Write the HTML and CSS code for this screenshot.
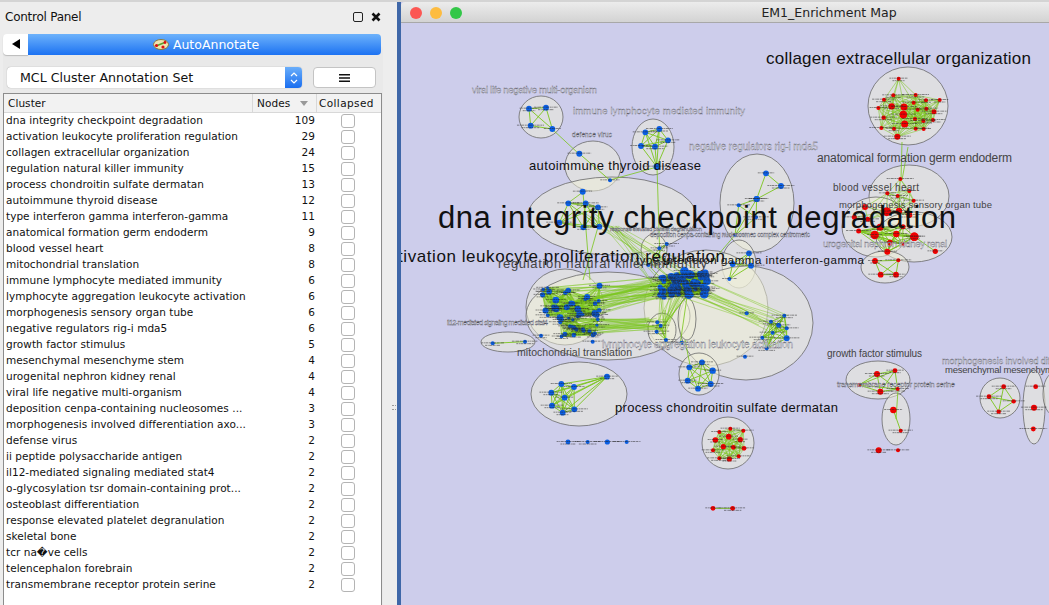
FILE: index.html
```html
<!DOCTYPE html>
<html>
  <head>
    <meta charset="utf-8">
    <title>EM1_Enrichment Map</title>
    <link rel="stylesheet" href="styles.css">
  </head>
  <body>
    <div class="controlPanel">
      <div class="panelTitle">
        <span>Control Panel</span>
        <div class="panelIcons">
          <span class="iconFloat"></span>
          <svg class="iconClose" width="10" height="10" viewBox="0 0 10 10"><path d="M1.5 1.5l7 7M8.5 1.5l-7 7"/></svg>
        </div>
      </div>
      <div class="tabBar">
        <button class="tabBack"><svg width="8" height="10" viewBox="0 0 8 10"><path d="M8 0v10L0 5z"/></svg></button>
        <button class="tabActive">
          <svg width="16" height="11" viewBox="0 0 16 11">
            <ellipse cx="8" cy="5.5" rx="7.5" ry="5" fill="#efe4b0" stroke="#8a7a3a"/>
            <path d="M3 7l10-4" stroke="#5aa02c" stroke-width="1.5"/>
            <circle cx="3.5" cy="6.5" r="1.6" fill="#e01010"/>
            <circle cx="10" cy="8" r="1.6" fill="#e01010"/>
            <circle cx="12" cy="3.5" r="1.4" fill="#e01010"/>
          </svg>
          AutoAnnotate
        </button>
      </div>
      <div class="tabBody">
        <div class="toolRow">
          <div class="combo">
            <span class="comboText">MCL Cluster Annotation Set</span>
            <span class="comboArrows">
              <svg width="8" height="14" viewBox="0 0 8 14"><path d="M1 5l3-3 3 3M1 9l3 3 3-3"/></svg>
            </span>
          </div>
          <button class="menuButton">
            <svg width="11" height="8" viewBox="0 0 11 8"><path d="M0 0h11v1.6H0zM0 3.2h11v1.6H0zM0 6.4h11V8H0z"/></svg>
          </button>
        </div>
        <div class="tableWrap">
          <div class="tableHeader">
            <div class="headCluster">Cluster</div>
            <div class="headNodes">Nodes <span class="sortArrow"></span></div>
            <div class="headCollapsed">Collapsed</div>
          </div>
          <div class="row"><span class="name">dna integrity checkpoint degradation</span><span class="num">109</span><span class="chk"><input type="checkbox"></span></div>
          <div class="row"><span class="name">activation leukocyte proliferation regulation</span><span class="num">29</span><span class="chk"><input type="checkbox"></span></div>
          <div class="row"><span class="name">collagen extracellular organization</span><span class="num">24</span><span class="chk"><input type="checkbox"></span></div>
          <div class="row"><span class="name">regulation natural killer immunity</span><span class="num">15</span><span class="chk"><input type="checkbox"></span></div>
          <div class="row"><span class="name">process chondroitin sulfate dermatan</span><span class="num">13</span><span class="chk"><input type="checkbox"></span></div>
          <div class="row"><span class="name">autoimmune thyroid disease</span><span class="num">12</span><span class="chk"><input type="checkbox"></span></div>
          <div class="row"><span class="name">type interferon gamma interferon-gamma</span><span class="num">11</span><span class="chk"><input type="checkbox"></span></div>
          <div class="row"><span class="name">anatomical formation germ endoderm</span><span class="num">9</span><span class="chk"><input type="checkbox"></span></div>
          <div class="row"><span class="name">blood vessel heart</span><span class="num">8</span><span class="chk"><input type="checkbox"></span></div>
          <div class="row"><span class="name">mitochondrial translation</span><span class="num">8</span><span class="chk"><input type="checkbox"></span></div>
          <div class="row"><span class="name">immune lymphocyte mediated immunity</span><span class="num">6</span><span class="chk"><input type="checkbox"></span></div>
          <div class="row"><span class="name">lymphocyte aggregation leukocyte activation</span><span class="num">6</span><span class="chk"><input type="checkbox"></span></div>
          <div class="row"><span class="name">morphogenesis sensory organ tube</span><span class="num">6</span><span class="chk"><input type="checkbox"></span></div>
          <div class="row"><span class="name">negative regulators rig-i mda5</span><span class="num">6</span><span class="chk"><input type="checkbox"></span></div>
          <div class="row"><span class="name">growth factor stimulus</span><span class="num">5</span><span class="chk"><input type="checkbox"></span></div>
          <div class="row"><span class="name">mesenchymal mesenchyme stem</span><span class="num">4</span><span class="chk"><input type="checkbox"></span></div>
          <div class="row"><span class="name">urogenital nephron kidney renal</span><span class="num">4</span><span class="chk"><input type="checkbox"></span></div>
          <div class="row"><span class="name">viral life negative multi-organism</span><span class="num">4</span><span class="chk"><input type="checkbox"></span></div>
          <div class="row"><span class="name">deposition cenpa-containing nucleosomes ...</span><span class="num">3</span><span class="chk"><input type="checkbox"></span></div>
          <div class="row"><span class="name">morphogenesis involved differentiation axo...</span><span class="num">3</span><span class="chk"><input type="checkbox"></span></div>
          <div class="row"><span class="name">defense virus</span><span class="num">2</span><span class="chk"><input type="checkbox"></span></div>
          <div class="row"><span class="name">ii peptide polysaccharide antigen</span><span class="num">2</span><span class="chk"><input type="checkbox"></span></div>
          <div class="row"><span class="name">il12-mediated signaling mediated stat4</span><span class="num">2</span><span class="chk"><input type="checkbox"></span></div>
          <div class="row"><span class="name">o-glycosylation tsr domain-containing prot...</span><span class="num">2</span><span class="chk"><input type="checkbox"></span></div>
          <div class="row"><span class="name">osteoblast differentiation</span><span class="num">2</span><span class="chk"><input type="checkbox"></span></div>
          <div class="row"><span class="name">response elevated platelet degranulation</span><span class="num">2</span><span class="chk"><input type="checkbox"></span></div>
          <div class="row"><span class="name">skeletal bone</span><span class="num">2</span><span class="chk"><input type="checkbox"></span></div>
          <div class="row"><span class="name">tcr na&#xFFFD;ve cells</span><span class="num">2</span><span class="chk"><input type="checkbox"></span></div>
          <div class="row"><span class="name">telencephalon forebrain</span><span class="num">2</span><span class="chk"><input type="checkbox"></span></div>
          <div class="row"><span class="name">transmembrane receptor protein serine</span><span class="num">2</span><span class="chk"><input type="checkbox"></span></div>
        </div>
      </div>
    </div>

    <div class="gutter"><span class="grip"></span></div>

    <div class="desktop">
      <div class="networkWindow">
        <div class="titleBar">
          <div class="lights">
            <span class="light red"></span>
            <span class="light yellow"></span>
            <span class="light green"></span>
          </div>
          <span class="windowTitle">EM1_Enrichment Map</span>
        </div>
        <svg id="canvas" class="canvas" viewBox="401 23 648 582" width="648" height="582"></svg>
      </div>
    </div>

    <script src="graph.js"></script>
  </body>
</html>
```

FILE: styles.css
```css
* { box-sizing: border-box; }
html, body { margin: 0; height: 100%; }
body {
  display: flex;
  height: 605px;
  overflow: hidden;
  background: #ededed;
  font-family: "DejaVu Sans", sans-serif;
  color: #111;
  border-top: 2px solid #d4d4d4;
}

/* left panel */
.controlPanel { width: 383px; flex: none; display: flex; flex-direction: column; }
.panelTitle {
  height: 28px;
  padding: 2px 2px 0 5px;
  display: flex;
  align-items: center;
  justify-content: space-between;
  font-size: 12px;
  letter-spacing: -.25px;
}
.panelIcons { display: flex; align-items: center; gap: 8px; }
.iconFloat { width: 10px; height: 10px; border: 1.5px solid #222; border-radius: 2px; }
.iconClose path { stroke: #111; stroke-width: 2.6; fill: none; }

.tabBar { display: flex; height: 21px; margin: 4px 2px 0 3px; position: relative; z-index: 1; }
.tabBack {
  width: 25px;
  border: none;
  background: #fff;
  border-radius: 4px 0 0 4px;
  padding: 0;
  box-shadow: 0 1px 1px #bbb;
}
.tabBack path { fill: #000; }
.tabActive {
  flex: 1;
  border: none;
  padding: 0 0 0 3px;
  border-radius: 0 4px 4px 0;
  background: linear-gradient(#6db2fb, #1c72f2);
  color: #fff;
  font: 12.5px "DejaVu Sans", sans-serif;
  display: flex;
  align-items: center;
  justify-content: center;
  gap: 4px;
}

.tabBody {
  flex: 1;
  margin: -9px 0 0 3px;
  padding-top: 21px;
  background: #e9e9e9;
  border-radius: 4px 4px 0 0;
  min-height: 0;
}
.toolRow { display: flex; gap: 11px; padding: 0 7px 0 4px; height: 21px; }
.combo {
  width: 295px;
  background: #fff;
  border-radius: 4px;
  display: flex;
  justify-content: space-between;
  box-shadow: 0 0 1px #888;
}
.comboText { padding-left: 13px; font-size: 12.6px; line-height: 21px; }
.comboArrows {
  width: 17px;
  background: linear-gradient(#6aaefa, #1a6ef0);
  border-radius: 0 4px 4px 0;
  display: flex;
  align-items: center;
  justify-content: center;
}
.comboArrows path { stroke: #fff; fill: none; stroke-width: 1.2; }
.menuButton {
  width: 63px;
  background: #fff;
  border: 1px solid #c4c4c4;
  border-radius: 4px;
  padding: 0;
}
.menuButton path { fill: #111; }

.tableWrap {
  margin-top: 5px;
  height: 520px;
  margin-right: 1px;
  background: #fff;
  border: 1px solid #8c8c8c;
  border-bottom: none;
  overflow: hidden;
}
.tableHeader {
  display: flex;
  height: 19px;
  background: #f2f2f2;
  border-bottom: 1px solid #d8d8d8;
  font-size: 10.5px;
  letter-spacing: .07px;
  line-height: 18px;
}
.headCluster { width: 249px; padding-left: 4px; border-right: 1px solid #d8d8d8; }
.headNodes { width: 64px; padding-left: 4px; border-right: 1px solid #d8d8d8; }
.headCollapsed { padding-left: 2px; letter-spacing: .4px; }
.sortArrow {
  display: inline-block;
  margin-left: 6px;
  border-left: 4.5px solid transparent;
  border-right: 4.5px solid transparent;
  border-top: 5px solid #999;
  vertical-align: 1px;
}
.row { display: flex; height: 16px; font-size: 10.5px; letter-spacing: .04px; line-height: 15px; }
.name { width: 249px; padding-left: 2px; white-space: nowrap; overflow: hidden; }
.num { width: 62px; text-align: right; }
.chk { flex: 1; display: flex; justify-content: center; padding-top: 1px; }
.chk input {
  appearance: none;
  margin: 0;
  width: 14px;
  height: 14px;
  background: #fff;
  border: 1px solid #b4b4b4;
  border-radius: 3px;
}

/* splitter between panel and desktop */
.gutter { width: 14px; flex: none; position: relative; }
.grip {
  position: absolute;
  left: 9px;
  top: 403px;
  width: 4px;
  height: 5px;
  border-top: 1px dotted #999;
  border-bottom: 1px dotted #999;
}

.desktop { flex: 1; background: #3f67a8; padding-left: 4px; min-width: 0; }
.networkWindow { height: 100%; display: flex; flex-direction: column; background: #cdcdeb; }
.titleBar {
  height: 21px;
  flex: none;
  position: relative;
  display: flex;
  align-items: center;
  justify-content: center;
  background: linear-gradient(#ececec, #d3d3d3);
  border-bottom: 1px solid #a8a8a8;
  border-radius: 4px 0 0 0;
  font-size: 12.5px;
}
.windowTitle { padding-left: 208px; color: #222; }
.lights { position: absolute; left: 9px; top: 5px; display: flex; gap: 8px; }
.light { width: 12px; height: 12px; border-radius: 50%; }
.red { background: #fc5753; }
.yellow { background: #fdbc40; }
.green { background: #33c748; }

.canvas { display: block; flex: 1; background: #cdcdeb; font-family: "Liberation Sans", sans-serif; }
.cluster { fill: rgba(240, 240, 215, .5); stroke: #6a6a6a; stroke-width: .8; }
.edge { stroke: #7cc61e; opacity: .9; }
.nodeLabel { stroke: #222; stroke-width: .9; stroke-dasharray: 2 .6 1 .5 3 .7; opacity: .55; }
.labelDark { fill: #111; }
.labelMid { fill: #444; }
.labelPale { fill: #f6f6fb; stroke: #50505e; stroke-width: .3; }
```

FILE: graph.js
```js
// enrichment map drawing, all coordinates are page pixels
var svg = document.getElementById('canvas');
var NS = 'http://www.w3.org/2000/svg';
var BLUE = '#0b5fe3', RED = '#f00000';

function add(name, attrs, parent) {
  var el = document.createElementNS(NS, name);
  for (var k in attrs) el.setAttribute(k, attrs[k]);
  (parent || svg).appendChild(el);
  return el;
}

// small repeatable random so the picture is the same every time
var seed = 7;
function rnd() {
  seed = (seed * 16807) % 2147483647;
  return seed / 2147483647;
}

var ellipses = [
  [541,117,22,21],[653,147,21,28],[593,166,28,25],[612,216,84,39],[757,203,37,49],
  [908,106,40,39],[909,196,40,31],[876,227,34,30],[914,237,38,25],[885,267,24,16],
  [739,264,17,24],[654,250,13,16],[706,308,62,58],[746,323,67,57],[565,307,39,38],
  [608,316,82,44],[687,319,9,21],[662,330,14,17],[508,342,27,10],[579,394,48,32],
  [699,374,20,21],[728,443,26,26],[878,380,32,19],[896,419,14,26],[1000,398,20,20],
  [1034,407,11,37],[1054,394,11,21]
];
ellipses.forEach(function(e) {
  add('ellipse', {cx: e[0], cy: e[1], rx: e[2], ry: e[3], 'class': 'cluster'});
});

// zoomed coordinates: page = origin + value / 3
function pts(ox, oy, list) {
  return list.map(function(p) {
    return {x: ox + p[0] / 3, y: oy + p[1] / 3, r: p[2] || 2.9};
  });
}

var groups = [
  {c: BLUE, all: true, n: pts(380,0,[[447,326],[498,323],[452,377],[517,387]])},
  {c: BLUE, all: true, n: pts(380,0,[[796,397],[838,387],[864,421],[783,438],[825,440],[830,500,3.2]])},
  {c: BLUE, all: true, n: pts(380,0,[[598,461,3],[690,541,2]])},
  {c: BLUE, all: true, n: pts(400,170,[[505,100],[557,100],[594,112],[478,158],[550,172],[598,170]])},
  {c: BLUE, all: false, n: pts(400,170,[[548,65,3]])},
  {c: BLUE, all: true, n: pts(720,30,[[110,507,3],[138,430],[183,468]])},
  {c: BLUE, all: true, n: pts(720,30,[[110,507,3],[56,526,2],[108,562,2],[45,616,2]])},
  {c: RED, all: true, n: pts(720,30,[[536,146,2],[587,195,2],[520,196,2],[492,209,2],[581,218,2],[618,211,2],[659,210,2],[475,234,2],[515,229,3.2],[552,231,3.5],[593,239,2],[619,236,2],[642,245,2.5],[550,254,3.8],[491,263,2.2],[585,267,2],[610,273,2],[639,270,2],[554,282,3.5],[484,294,2],[522,296,2],[587,296,2],[611,297,2],[532,320,3]])},
  {c: RED, all: true, n: pts(720,30,[[541,447,2],[502,490,2],[533,498,2],[568,483,2],[581,512,2],[435,531,3],[500,545,4.5],[537,543,3.2],[568,555,3],[403,562,2.5],[443,568,2.5]])},
  {c: RED, all: true, n: pts(720,30,[[480,592,3.5],[549,590,2.5],[416,603,2.5],[464,615,4.2],[529,612,3.2],[583,620,4.2],[510,638,3],[548,642,2],[502,665,3]])},
  {c: RED, all: true, n: pts(720,30,[[583,620,4.2],[646,664,2.6]])},
  {c: RED, all: true, n: pts(720,30,[[465,693],[535,691,2],[482,734],[528,734]])},
  {c: BLUE, all: true, n: pts(400,170,[[1047,250],[1053,287],[998,282],[988,327,2]])},
  {c: BLUE, all: true, n: pts(400,170,[[800,222,2],[778,235,2],[745,285,2]])},
  {c: BLUE, all: true, n: pts(400,170,[[772,457,2],[782,467,2],[770,485,2],[798,510,2]])},
  {c: BLUE, all: true, n: pts(400,170,[[1153,437,2],[1113,455,2],[1136,466,2.5],[1160,475,2],[1118,488,2],[1087,503,2],[1160,505,3],[1100,535,2]])},
  {c: BLUE, all: false, n: pts(400,170,[[1040,430,2],[1035,560,2],[845,518,2]])},
  {c: BLUE, all: true, n: pts(400,170,[[278,520,2],[375,515,2]])},
  {c: BLUE, all: false, n: pts(400,170,[[423,497,2],[578,515,2]])},
  {c: BLUE, all: true, n: pts(440,340,[[501,110],[364,132],[402,141],[334,158],[374,173],[336,197],[403,208],[368,218]])},
  {c: BLUE, all: true, n: pts(440,340,[[786,67],[748,82],[818,92,3.2],[743,122],[812,132,3],[774,146]])},
  {c: RED, all: true, n: pts(440,340,[[871,266,2],[838,276,2],[910,272,2],[826,300,2.8],[866,290,2.8],[901,299,2.6],[850,320,2.6],[880,322,2.4],[912,325,2.4],[819,331,2],[838,355,2],[868,357,2.6],[896,349,2]])},
  {c: BLUE, all: false, n: pts(440,340,[[384,306,2.4],[443,306,2],[502,306,2.6],[560,306,2]])},
  {c: RED, all: true, n: pts(440,340,[[819,505,2.4],[878,505,2.4]])},
  {c: RED, all: true, n: pts(780,340,[[291,102,3],[345,92,2.4],[237,135,2],[301,155,3],[353,147,2]])},
  {c: RED, all: true, n: pts(780,340,[[340,210,3.2],[362,272,2]])},
  {c: RED, all: false, n: pts(780,340,[[296,331,3],[354,331,2]])},
  {c: RED, all: true, n: pts(780,340,[[671,140,2.4],[627,170,2.4],[701,184,2.2],[656,215,2.2]])},
  {c: RED, all: false, n: pts(780,340,[[767,140,2.4],[762,203,3],[760,267,2.4]])}
];

function scatter(c, n, x0, y0, x1, y1, r0, r1) {
  var list = [];
  for (var i = 0; i < n; i++) {
    list.push({x: x0 + rnd() * (x1 - x0), y: y0 + rnd() * (y1 - y0), r: r0 + rnd() * (r1 - r0)});
  }
  return {c: c, all: true, dark: true, n: list};
}

// the three dense blue clumps
var hub = scatter(BLUE, 46, 660, 271, 710, 297, 2, 4.6);
var left = scatter(BLUE, 30, 541, 285, 602, 318, 1.6, 3.4);
var low = scatter(BLUE, 18, 555, 318, 598, 338, 1.4, 2.4);
groups.push(left, low, hub);

var edgeLayer = add('g', {});
var nodeLayer = add('g', {});
var labelLayer = add('g', {});

function line(a, b, w) {
  add('line', {x1: a.x, y1: a.y, x2: b.x, y2: b.y, 'class': 'edge', 'stroke-width': w || .5}, edgeLayer);
}
function pick(list) {
  return list[Math.floor(rnd() * list.length)];
}
function at(x, y) { return {x: x, y: y}; }

groups.forEach(function(g) {
  var big = g.n.length > 9;
  if (g.all) {
    for (var i = 0; i < g.n.length; i++) {
      for (var j = i + 1; j < g.n.length; j++) {
        var d = Math.hypot(g.n[i].x - g.n[j].x, g.n[i].y - g.n[j].y);
        // big clusters only join near neighbours, the small ones are complete
        if (!big || d < 34) line(g.n[i], g.n[j], big ? .6 : 1);
      }
    }
  }
  g.n.forEach(function(p) {
    add('circle', {cx: p.x, cy: p.y, r: p.r, fill: g.c}, nodeLayer);
    var w = 14 + rnd() * 14;
    var extra = {x1: p.x - w / 2, y1: p.y - .5, x2: p.x + w / 2, y2: p.y - .5, 'class': 'nodeLabel'};
    if (g.dark) extra.opacity = .85;
    add('line', extra, labelLayer);
    if (g.dark || rnd() > .5) {
      add('line', {x1: p.x - w / 3, y1: p.y + 2, x2: p.x + w / 3, y2: p.y + 2, 'class': 'nodeLabel'}, labelLayer);
    }
  });
});

// edges running between clusters
var i;
for (i = 0; i < 55; i++) line(pick(hub.n), pick(left.n), .45);
for (i = 0; i < 32; i++) line(at(645 + rnd() * 22, 318 + rnd() * 12), pick(low.n), .45);
for (i = 0; i < 20; i++) line(pick(hub.n), at(657 + rnd() * 8, 322 + rnd() * 14));
for (i = 0; i < 16; i++) line(pick(hub.n), at(755 + rnd() * 35, 315 + rnd() * 20));
for (i = 0; i < 7; i++) line(pick(hub.n), at(575 + rnd() * 30, 203 + rnd() * 24));
for (i = 0; i < 8; i++) line(at(610 + rnd() * 8, 226), pick(hub.n));

[
  [552,129,579,154],[610,180,657,167],[657,167,660,262],[583,192,590,280],[598,227,583,280],
  [568,203,583,192],[735,235,712,262],[908,147,902,180],[902,142,901,179],[896,419,898,390],
  [688,290,680,345],[685,340,690,365],[666,345,665,310]
].forEach(function(s) {
  line(at(s[0], s[1]), at(s[2], s[3]), .9);
});

// cluster labels: text, left x, baseline, size, width, class
var labels = [
  ['viral life negative multi-organism',472,93,9.5,125,'labelPale'],
  ['immune lymphocyte mediated immunity',573,114,9.5,172,'labelPale'],
  ['defense virus',572,137,6.5,40,'labelPale'],
  ['negative regulators rig-i mda5',689,150,10,129,'labelPale'],
  ['collagen extracellular organization',766,64,17,265,'labelDark'],
  ['anatomical formation germ endoderm',817,162,12,195,'labelMid'],
  ['autoimmune thyroid disease',529,170,13,172,'labelDark'],
  ['blood vessel heart',833,191,10,86,'labelMid'],
  ['morphogenesis sensory organ tube',839,208,9.5,153,'labelMid'],
  ['response elevated platelet degranulation',610,231,6,92,'labelPale'],
  ['deposition cenpa-containing nucleosomes complex centromeric',650,237,6.5,160,'labelPale'],
  ['urogenital nephron kidney renal',823,247,9.5,124,'labelPale'],
  ['type interferon gamma interferon-gamma',636,264,11.5,228,'labelDark'],
  ['activation leukocyte proliferation regulation',379,262,17,346,'labelDark'],
  ['regulation natural killer immunity',498,268,13,209,'labelMid'],
  ['il12-mediated signaling mediated stat4',447,325,7.5,101,'labelPale'],
  ['lymphocyte aggregation leukocyte activation',602,348,10.5,191,'labelPale'],
  ['mitochondrial translation',517,356,10.5,115,'labelMid'],
  ['growth factor stimulus',827,357,10,95,'labelMid'],
  ['morphogenesis involved differentiation axonogenesis',942,364,9,210,'labelPale'],
  ['mesenchymal mesenchyme stem',945,373,9.5,135,'labelMid'],
  ['transmembrane receptor protein serine',837,387,7.5,118,'labelPale'],
  ['process chondroitin sulfate dermatan',615,412,13,223,'labelDark'],
  ['dna integrity checkpoint degradation',438,228,31,518,'labelDark']
];
labels.forEach(function(l) {
  var t = add('text', {x: l[1], y: l[2], 'font-size': l[3], textLength: l[4], 'class': l[5]});
  t.textContent = l[0];
});
```
